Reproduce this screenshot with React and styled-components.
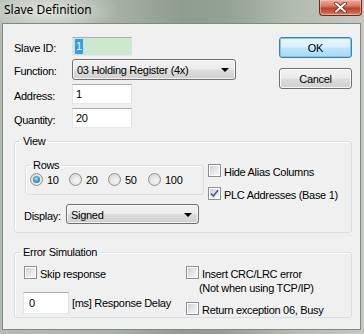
import React from "react";
import styled, { createGlobalStyle } from "styled-components";

const Global = createGlobalStyle`
  html, body { margin: 0; padding: 0; background: #fff; }
  body {
    font-family: "Liberation Sans", Arial, sans-serif;
    font-size: 11px;
    letter-spacing: -0.3px;
    color: #000;
  }
`;

const Window = styled.div`
  width: 364px;
  height: 334px;
  box-sizing: border-box;
  display: flex;
  flex-direction: column;
  padding: 0 3px 4px 2px;
  background:
    radial-gradient(ellipse 70px 22px at 48px 11px, rgba(236, 240, 234, 0.85), rgba(236, 240, 234, 0) 100%),
    linear-gradient(90deg, #b4bcb2 0%, #a9b2a7 30%, #8f9c90 50%, #93a094 62%, #b2bbb0 80%, #c3c9c0 100%);
`;

const TitleBar = styled.div`
  height: 23px;
  flex: none;
  display: flex;
  justify-content: space-between;
  align-items: flex-start;
`;

const Title = styled.div`
  font-family: "Noto Sans", "Liberation Sans", sans-serif;
  font-size: 12px;
  letter-spacing: 0;
  line-height: 16px;
  padding: 2px 0 0 2px;
  color: #000;
`;

const CloseButton = styled.div`
  width: 43px;
  height: 16px;
  margin-right: -1px;
  box-sizing: border-box;
  border: 1px solid #6b2b20;
  border-top: none;
  border-radius: 0 0 4px 4px;
  background: linear-gradient(180deg, #e9ab9b 0%, #d67a64 40%, #c1442b 55%, #cc5b40 80%, #e08a6c 100%);
  box-shadow: inset 0 0 0 1px rgba(255, 220, 200, 0.45);
  display: flex;
  align-items: center;
  justify-content: center;
`;

const Client = styled.div`
  flex: 1;
  background: #f0f0f0;
  border: 1px solid #7d8b80;
  display: flex;
  flex-direction: column;
`;

const Top = styled.div`
  display: flex;
  justify-content: space-between;
  padding: 13px 8px 0 11px;
`;

const Form = styled.div`
  display: flex;
  flex-direction: column;
`;

const Row = styled.div`
  display: flex;
  align-items: center;
  height: ${(p) => p.$h}px;
  margin-top: ${(p) => p.$mt || 0}px;
`;

const Label = styled.div`
  width: ${(p) => p.$w || 58}px;
  padding-top: 3px;
  flex: none;
`;

const TextBox = styled.div`
  width: ${(p) => p.$w}px;
  height: 100%;
  box-sizing: border-box;
  border: 1px solid;
  border-color: #abadb3 #dbdfe6 #e3e9ef #e2e3ea;
  background: ${(p) => p.$bg || "#fff"};
  display: flex;
  align-items: center;
  padding-left: ${(p) => p.$pl || 3}px;
  margin-left: ${(p) => p.$ml || 0}px;
`;

const Selected = styled.span`
  background: #3399ff;
  color: #fff;
  padding: 0 1px;
  line-height: 15px;
`;

const Combo = styled.div`
  width: ${(p) => p.$w}px;
  height: 100%;
  box-sizing: border-box;
  border: 1px solid #707070;
  border-radius: 3px;
  background: linear-gradient(180deg, #f2f2f2 0%, #ebebeb 48%, #dddddd 52%, #cfcfcf 100%);
  box-shadow: inset 0 0 0 1px rgba(255, 255, 255, 0.7);
  display: flex;
  align-items: center;
  justify-content: space-between;
  padding: 1px 6px 0 4px;
`;

const Arrow = styled.div`
  width: 0;
  height: 0;
  border-left: 4px solid transparent;
  border-right: 4px solid transparent;
  border-top: 4px solid #000;
`;

const Buttons = styled.div`
  display: flex;
  flex-direction: column;
  gap: 10px;
`;

const Button = styled.div`
  width: 73px;
  height: 21px;
  box-sizing: border-box;
  border: 1px solid ${(p) => (p.$primary ? "#3c7fb1" : "#707070")};
  border-radius: 3px;
  background: ${(p) =>
    p.$primary
      ? "linear-gradient(180deg, #eaf6fd 0%, #d9f0fc 48%, #bee6fd 52%, #a7d9f5 100%)"
      : "linear-gradient(180deg, #f2f2f2 0%, #ebebeb 48%, #dddddd 52%, #cfcfcf 100%)"};
  box-shadow: inset 0 0 0 1px ${(p) => (p.$primary ? "rgba(110, 200, 245, 0.9)" : "rgba(255, 255, 255, 0.8)")};
  display: flex;
  align-items: center;
  justify-content: center;
  padding-top: 1px;
`;

const Group = styled.fieldset`
  margin: ${(p) => p.$m};
  padding: 0;
  min-width: 0;
  border: 1px solid #d5dfe5;
  border-radius: 3px;
  box-shadow: inset 1px 1px 0 #fff;
  width: ${(p) => (p.$w ? `${p.$w}px` : "auto")};
  box-sizing: border-box;
  flex: none;
`;

const Legend = styled.legend`
  padding: 0 3px;
  margin-left: ${(p) => p.$ml}px;
  line-height: 13px;
`;

const GroupBody = styled.div`
  padding: ${(p) => p.$p};
  display: flex;
  flex-direction: column;
`;

const ViewTop = styled.div`
  display: flex;
  align-items: flex-start;
  gap: 4px;
`;

const RadioRow = styled.div`
  display: flex;
`;

const RadioItem = styled.div`
  display: flex;
  align-items: center;
  width: ${(p) => (p.$w ? `${p.$w}px` : "auto")};
  gap: 4px;
  height: 13px;
`;

const RadioCircle = styled.div`
  width: 13px;
  height: 13px;
  box-sizing: border-box;
  border-radius: 50%;
  border: 1px solid #8e8f8f;
  background: radial-gradient(circle at 60% 60%, #f8f8f8 0%, #e2e2e2 55%, #cdcdcd 100%);
  display: flex;
  align-items: center;
  justify-content: center;
  flex: none;
  &::after {
    content: "";
    display: ${(p) => (p.$on ? "block" : "none")};
    width: 7px;
    height: 7px;
    border-radius: 50%;
    background: radial-gradient(circle at 45% 40%, #b5ecff 0%, #4aa3d6 40%, #1a5d8c 100%);
  }
`;

const Checks = styled.div`
  display: flex;
  flex-direction: column;
  gap: 10px;
  margin-top: ${(p) => p.$mt || 0}px;
`;

const CheckRow = styled.div`
  display: flex;
  align-items: flex-start;
  height: 13px;
  gap: 3px;
`;

const Box = styled.div`
  width: 13px;
  height: 13px;
  box-sizing: border-box;
  border: 1px solid #8e8f8f;
  background: #fff;
  padding: 1px;
  flex: none;
  display: flex;
  & > span {
    flex: 1;
    background: linear-gradient(135deg, #cbcfd5 0%, #e4e6e9 50%, #f6f6f6 100%);
    display: flex;
    align-items: center;
    justify-content: center;
  }
`;

const CheckText = styled.div`
  line-height: 13px;
  padding-top: 2px;
  white-space: nowrap;
`;

const Note = styled.div`
  line-height: 13px;
  margin: 3px 0 0 13px;
`;

const DisplayRow = styled.div`
  display: flex;
  align-items: center;
  height: 20px;
  margin-top: 4px;
`;

const ErrorCols = styled.div`
  display: flex;
`;

const Col = styled.div`
  display: flex;
  flex-direction: column;
  width: ${(p) => (p.$w ? `${p.$w}px` : "auto")};
`;

const DelayRow = styled.div`
  display: flex;
  align-items: center;
  height: 22px;
  margin-top: 13px;
  gap: 3px;
`;

const Check = ({ on, children }) => (
  <CheckRow>
    <Box>
      <span>
        {on && (
          <svg width="9" height="9" viewBox="0 0 9 9">
            <path d="M1 4.5 L3.4 7 L8 1.2" fill="none" stroke="#4a5f97" strokeWidth="1.8" />
          </svg>
        )}
      </span>
    </Box>
    <CheckText>{children}</CheckText>
  </CheckRow>
);

const Radio = ({ on, w, children }) => (
  <RadioItem $w={w}>
    <RadioCircle $on={on} />
    <span>{children}</span>
  </RadioItem>
);

export default function App() {
  return (
    <>
      <Global />
      <Window>
        <TitleBar>
          <Title>Slave Definition</Title>
          <CloseButton>
            <svg width="13" height="11" viewBox="0 0 13 11">
              <path d="M2 1.5 L11 9.5 M11 1.5 L2 9.5" stroke="#5a2a22" strokeWidth="3.6" strokeLinecap="round" />
              <path d="M2 1.5 L11 9.5 M11 1.5 L2 9.5" stroke="#fff" strokeWidth="2" strokeLinecap="round" />
            </svg>
          </CloseButton>
        </TitleBar>
        <Client>
          <Top>
            <Form>
              <Row $h={19}>
                <Label>Slave ID:</Label>
                <TextBox $w={60} $bg="#cce8cf" $pl={2}>
                  <Selected>1</Selected>
                </TextBox>
              </Row>
              <Row $h={21} $mt={3}>
                <Label>Function:</Label>
                <Combo $w={164}>
                  <span>03 Holding Register (4x)</span>
                  <Arrow />
                </Combo>
              </Row>
              <Row $h={20} $mt={4}>
                <Label>Address:</Label>
                <TextBox $w={60}>1</TextBox>
              </Row>
              <Row $h={20} $mt={4}>
                <Label>Quantity:</Label>
                <TextBox $w={60}>20</TextBox>
              </Row>
            </Form>
            <Buttons>
              <Button $primary>OK</Button>
              <Button>Cancel</Button>
            </Buttons>
          </Top>

          <Group $m="7px 8px 0 11px">
            <Legend $ml={5}>View</Legend>
            <GroupBody $p="11px 0 8px 9px">
              <ViewTop>
                <Group $m="0 0 0 1px" $w={179}>
                  <Legend $ml={4}>Rows</Legend>
                  <GroupBody $p="1px 0 8px 4px">
                    <RadioRow>
                      <Radio on w={39}>10</Radio>
                      <Radio w={39}>20</Radio>
                      <Radio w={40}>50</Radio>
                      <Radio>100</Radio>
                    </RadioRow>
                  </GroupBody>
                </Group>
                <Checks $mt={5}>
                  <Check>Hide Alias Columns</Check>
                  <Check on>PLC Addresses (Base 1)</Check>
                </Checks>
              </ViewTop>
              <DisplayRow>
                <Label $w={42}>Display:</Label>
                <Combo $w={133}>
                  <span>Signed</span>
                  <Arrow />
                </Combo>
              </DisplayRow>
            </GroupBody>
          </Group>

          <Group $m="13px 8px 0 11px">
            <Legend $ml={5}>Error Simulation</Legend>
            <GroupBody $p="7px 0 2px 9px">
              <ErrorCols>
                <Col $w={162}>
                  <Check>Skip response</Check>
                  <DelayRow>
                    <TextBox $w={46} $ml={-1} $pl={5}>0</TextBox>
                    <span>[ms] Response Delay</span>
                  </DelayRow>
                </Col>
                <Col>
                  <Check>Insert CRC/LRC error</Check>
                  <Note>(Not when using TCP/IP)</Note>
                  <Checks $mt={7}>
                    <Check>Return exception 06, Busy</Check>
                  </Checks>
                </Col>
              </ErrorCols>
            </GroupBody>
          </Group>
        </Client>
      </Window>
    </>
  );
}
